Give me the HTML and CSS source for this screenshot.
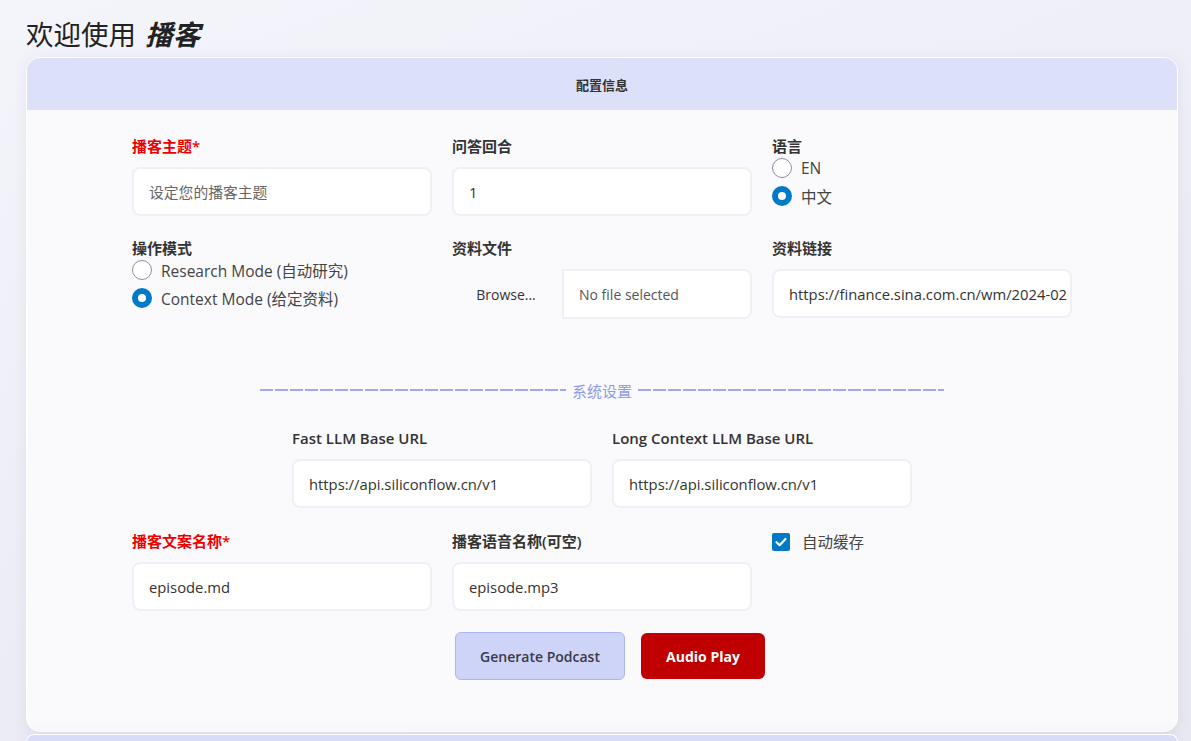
FILE: index.html
```html
<!DOCTYPE html>
<html lang="zh">
<head>
<meta charset="utf-8">
<title>播客</title>
<link rel="stylesheet" href="styles.css">
</head>
<body>
<h1 class="title">欢迎使用 <em>播客</em></h1>
<section class="card">
  <div class="card-head">配置信息</div>
  <div class="card-body">
    <div class="grid3">
      <div class="field">
        <div class="label required">播客主题*</div>
        <div class="input placeholder">设定您的播客主题</div>
      </div>
      <div class="field">
        <div class="label">问答回合</div>
        <div class="input">1</div>
      </div>
      <div class="field">
        <div class="label">语言</div>
        <div class="radios">
          <div class="radio"><span class="dot"></span>EN</div>
          <div class="radio"><span class="dot on"></span>中文</div>
        </div>
      </div>
      <div class="field">
        <div class="label">操作模式</div>
        <div class="radios">
          <div class="radio"><span class="dot"></span>Research Mode (自动研究)</div>
          <div class="radio"><span class="dot on"></span>Context Mode (给定资料)</div>
        </div>
      </div>
      <div class="field">
        <div class="label">资料文件</div>
        <div class="file">
          <span class="browse">Browse...</span>
          <span class="file-box">No file selected</span>
        </div>
      </div>
      <div class="field">
        <div class="label">资料链接</div>
        <div class="input">https://finance.sina.com.cn/wm/2024-02</div>
      </div>
    </div>

    <div class="divider">
      <span class="dash"></span>
      <span class="divider-text">系统设置</span>
      <span class="dash"></span>
    </div>

    <div class="grid2">
      <div class="field">
        <div class="label">Fast LLM Base URL</div>
        <div class="input">https://api.siliconflow.cn/v1</div>
      </div>
      <div class="field">
        <div class="label">Long Context LLM Base URL</div>
        <div class="input">https://api.siliconflow.cn/v1</div>
      </div>
    </div>

    <div class="grid3 row4">
      <div class="field">
        <div class="label required">播客文案名称*</div>
        <div class="input">episode.md</div>
      </div>
      <div class="field">
        <div class="label">播客语音名称(可空)</div>
        <div class="input">episode.mp3</div>
      </div>
      <div class="field">
        <div class="check">
          <span class="box"><svg viewBox="0 0 18 18" width="18" height="18"><path d="M4.5 9.2 L7.6 12.2 L13.5 6" fill="none" stroke="#fff" stroke-width="2.2" stroke-linecap="round" stroke-linejoin="round"/></svg></span>
          自动缓存
        </div>
      </div>
    </div>

    <div class="actions">
      <button class="btn btn-gen">Generate Podcast</button>
      <button class="btn btn-play">Audio Play</button>
    </div>
  </div>
</section>
<section class="card card2"></section>
</body>
</html>
```

FILE: styles.css
```css
html, body {
  margin: 0;
  padding: 0;
}
body {
  background: linear-gradient(160deg, #f4f4fb 0%, #ececf6 60%, #e8e8f2 100%);
  font-family: "Open Sans", "Noto Sans CJK SC", sans-serif;
  color: #333;
  padding: 0 13px 0 26px;
  height: 741px;
  overflow: hidden;
  box-sizing: border-box;
}
.title {
  margin: 0;
  padding-top: 14px;
  height: 57px;
  box-sizing: border-box;
  font-size: 27.5px;
  line-height: 38px;
  font-weight: 400;
  color: #222;
  font-family: "Noto Sans CJK SC", sans-serif;
}
.title em {
  font-weight: 700;
  font-style: italic;
  margin-left: 3px;
}
.card {
  background: #fafafd;
  border: 1px solid #ffffff;
  border-radius: 14px;
  box-shadow: 0 2px 14px rgba(120, 120, 160, 0.12);
  overflow: hidden;
  width: 1152px;
  box-sizing: border-box;
}
.card-head {
  background: #dce0f9;
  height: 52px;
  display: flex;
  align-items: center;
  justify-content: center;
  font-size: 13px;
  font-weight: 700;
  color: #333;
  font-family: "Noto Sans CJK SC", sans-serif;
}
.card-body {
  padding: 26px 0 51px;
  display: flex;
  flex-direction: column;
  align-items: center;
}
.grid3 {
  display: grid;
  grid-template-columns: 300px 300px 300px;
  column-gap: 20px;
  row-gap: 22px;
}
.grid2 {
  display: grid;
  grid-template-columns: 300px 300px;
  column-gap: 20px;
}
.row4 {
  margin-top: 23px;
}
.field {
  display: flex;
  flex-direction: column;
}
.label {
  font-size: 15px;
  font-weight: 600;
  line-height: 21px;
  color: #333;
  margin-bottom: 10px;
}
.label.required {
  color: #ee0000;
}
.input {
  height: 49px;
  box-sizing: border-box;
  border: 2px solid #eff0f5;
  border-radius: 8px;
  background: #fff;
  padding: 0 15px;
  display: flex;
  align-items: center;
  font-size: 14.8px;
  color: #333;
  white-space: nowrap;
  overflow: hidden;
}
.input.placeholder {
  color: #666;
}
.radios {
  display: flex;
  flex-direction: column;
  margin-top: -13px;
}
.radio {
  display: flex;
  align-items: center;
  height: 28px;
  font-size: 15.5px;
  color: #444;
}
.dot {
  width: 20px;
  height: 20px;
  box-sizing: border-box;
  border-radius: 50%;
  border: 1px solid #8f8f9d;
  background: #fff;
  margin-right: 9px;
  flex: none;
}
.dot.on {
  border: 6px solid #0079c6;
}
.file {
  display: flex;
  align-items: stretch;
  height: 50px;
}
.browse {
  width: 110px;
  display: flex;
  align-items: center;
  justify-content: center;
  font-size: 14px;
  color: #333;
  padding-right: 2px;
  box-sizing: border-box;
}
.file-box {
  flex: 1;
  border: 2px solid #eff0f5;
  border-radius: 0 8px 8px 0;
  background: #fff;
  display: flex;
  align-items: center;
  padding: 0 15px;
  font-size: 14px;
  color: #555;
}
.divider {
  display: flex;
  align-items: center;
  gap: 6px;
  margin-top: 61px;
  margin-bottom: 28px;
  height: 20px;
}
.dash {
  width: 306px;
  height: 2px;
  background: repeating-linear-gradient(90deg, #9eaaf0 0 13px, transparent 13px 15px);
}
.divider-text {
  font-size: 15px;
  color: #8c9ae8;
  font-family: "Noto Sans CJK SC", sans-serif;
}
.check {
  display: flex;
  align-items: center;
  height: 21px;
  font-size: 15.5px;
  color: #444;
}
.box {
  width: 18px;
  height: 18px;
  border-radius: 2px;
  background: #0079c6;
  margin-right: 12px;
  display: flex;
}
.actions {
  display: flex;
  align-items: center;
  gap: 16px;
  margin-top: 21px;
  padding-left: 16px;
}
.btn {
  font-family: "Open Sans", "Noto Sans CJK SC", sans-serif;
  font-size: 14px;
  border-radius: 6px;
  cursor: pointer;
}
.btn-gen {
  width: 170px;
  height: 48px;
  background: #cdd4f8;
  border: 1px solid #a9b6f2;
  color: #3a3a48;
  font-weight: 600;
}
.btn-play {
  width: 124px;
  height: 46px;
  background: #c00000;
  border: none;
  color: #fff;
  font-weight: 700;
}
.card2 {
  margin-top: 2px;
  height: 8px;
  background: #d8dcf4;
  border-radius: 14px 14px 0 0;
  border-bottom: none;
}
```
